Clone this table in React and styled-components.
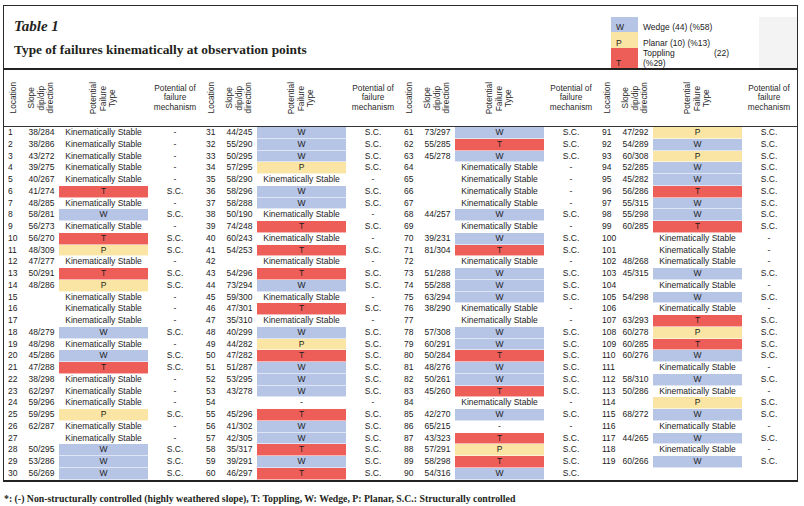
import React from 'react';
import styled, { createGlobalStyle } from 'styled-components';

const GlobalStyle = createGlobalStyle`
  html, body { margin: 0; padding: 0; background: #fff; }
  body { font-family: "Liberation Sans", Arial, sans-serif; color: #1e1e1e; }
`;

const fills = { W: '#b6c5e6', P: '#fbe5a4', T: '#ee5e59' };

const raw = [
  '38/284:K,38/286:K,43/272:K,39/275:K,40/267:K,41/274:T,48/285:K,58/281:W,56/273:K,56/270:T,48/309:P,47/277:K,50/291:T,48/286:P,:K,:K,:K,48/279:W,48/298:K,45/286:W,47/288:T,38/298:K,62/297:K,59/296:K,59/295:P,62/287:K,:K,50/295:W,53/286:W,56/269:W',
  '44/245:W,55/290:W,50/295:W,57/295:P,58/290:K,58/296:W,58/288:W,50/190:K,74/248:T,60/243:K,54/253:T,:K,54/296:T,73/294:W,59/300:K,47/301:T,35/310:K,40/299:W,44/282:P,47/282:T,51/287:W,53/295:W,43/278:W,:D,45/296:T,41/302:W,42/305:W,35/317:T,39/291:W,46/297:T',
  '73/297:W,55/285:T,45/278:W,:K,:K,:K,:K,44/257:W,:K,39/231:W,81/304:T,:K,51/288:W,55/288:W,63/294:W,38/290:K,:K,57/308:W,60/291:W,50/284:T,48/276:W,50/261:W,45/260:T,:K,42/270:W,65/215:D,43/323:T,57/291:P,58/298:T,54/316:W',
  '47/292:P,54/289:W,60/308:P,52/285:W,45/282:W,56/286:T,55/315:W,55/298:W,60/285:T,:K,:K,48/268:K,45/315:W,:K,54/298:W,:K,63/293:T,60/278:P,60/285:T,60/276:W,:K,58/310:W,50/286:K,:P,68/272:W,:K,44/265:W,:K,60/266:W',
];

const groups = raw.map((s, gi) =>
  s.split(',').map((item, i) => {
    const [slope, type] = item.split(':');
    return { loc: gi * 30 + i + 1, slope, type };
  })
);

const typeLabel = (t) =>
  t === 'K' ? 'Kinematically Stable' : t === 'D' ? '-' : t;
const mechLabel = (t) => (fills[t] ? 'S.C.' : '-');

const Page = styled.div`
  width: 804px;
  height: 506px;
  box-sizing: border-box;
  padding: 5px 0 0 3px;
  overflow: hidden;
`;

const Frame = styled.div`
  width: 795px;
  box-sizing: border-box;
  border: 1px solid #2a2a2a;
  border-bottom: 2px solid #222;
`;

const TopSection = styled.div`
  display: flex;
  justify-content: space-between;
  height: 62px;
`;

const TitleBlock = styled.div`
  padding: 13px 0 0 10px;
  font-family: "Liberation Serif", "Times New Roman", serif;
  color: #231f20;
`;

const TableLabel = styled.div`
  font-style: italic;
  font-weight: 700;
  font-size: 15px;
  line-height: 15px;
`;

const Title = styled.div`
  font-weight: 700;
  font-size: 13.4px;
  line-height: 15px;
  margin-top: 8px;
`;

const Legend = styled.div`
  align-self: flex-end;
  display: grid;
  grid-template-columns: 27px 121px 38px;
  grid-template-rows: 15px 16px 20px;
  font-size: 8.5px;
  line-height: 10px;
  color: #222;
`;

const Swatch = styled.div`
  background: ${(p) => fills[p.$t]};
  display: flex;
  align-items: flex-end;
  padding: 0 0 0 5px;
`;

const LegendText = styled.div`
  display: flex;
  flex-direction: column;
  justify-content: flex-end;
  padding-left: 5px;
`;

const SpreadLine = styled.div`
  display: flex;
  justify-content: space-between;
  width: 86px;
`;

const GrayBox = styled.div`
  grid-column: 3;
  grid-row: 1 / span 3;
  background: #f3f3f3;
`;

const Header = styled.div`
  display: flex;
  height: 59px;
  box-sizing: border-box;
  border-top: 2px solid #222;
  border-bottom: 1px solid #333;
`;

const colTemplate = '20px 35px 89px 54px';

const HeadGroup = styled.div`
  width: 198px;
  display: grid;
  grid-template-columns: ${colTemplate};
  font-size: 8.3px;
  line-height: 9.5px;
  color: #2a2a2a;
`;

const Rotated = styled.div`
  writing-mode: vertical-rl;
  transform: rotate(180deg);
  text-align: center;
  place-self: center;
`;

const MechHead = styled.div`
  place-self: center;
  text-align: center;
`;

const Body = styled.div`
  display: flex;
`;

const Group = styled.div`
  width: 198px;
  display: grid;
  grid-template-rows: repeat(30, 11.75px);
`;

const Row = styled.div`
  display: grid;
  grid-template-columns: ${colTemplate};
  font-size: 8.5px;
  line-height: 11.75px;
  color: #1c1c1c;
  white-space: nowrap;
`;

const Loc = styled.div`
  padding-left: 4px;
`;

const Slope = styled.div`
  text-align: center;
`;

const TypeCell = styled.div`
  text-align: center;
  background: ${(p) => fills[p.$t] || 'transparent'};
  box-shadow: ${(p) =>
    fills[p.$t] ? 'inset 0 -1px 0 rgba(255,255,255,0.55)' : 'none'};
`;

const Mech = styled.div`
  text-align: center;
`;

const Footer = styled.div`
  font-family: "Liberation Serif", "Times New Roman", serif;
  font-weight: 700;
  font-size: 9.8px;
  line-height: 10px;
  margin-top: 12px;
  padding-left: 1px;
  color: #231f20;
`;

const HeaderCells = () => (
  <HeadGroup>
    <Rotated>Location</Rotated>
    <Rotated>
      Slope
      <br />
      dip/dip
      <br />
      direction
    </Rotated>
    <Rotated>
      Potential
      <br />
      Failure
      <br />
      Type
    </Rotated>
    <MechHead>
      Potential of
      <br />
      failure
      <br />
      mechanism
    </MechHead>
  </HeadGroup>
);

export default function App() {
  return (
    <Page>
      <GlobalStyle />
      <Frame>
        <TopSection>
          <TitleBlock>
            <TableLabel>Table 1</TableLabel>
            <Title>Type of failures kinematically at observation points</Title>
          </TitleBlock>
          <Legend>
            <Swatch $t="W">W</Swatch>
            <LegendText>Wedge (44) (%58)</LegendText>
            <GrayBox />
            <Swatch $t="P">P</Swatch>
            <LegendText>Planar (10) (%13)</LegendText>
            <Swatch $t="T">T</Swatch>
            <LegendText>
              <SpreadLine>
                <span>Toppling</span>
                <span>(22)</span>
              </SpreadLine>
              <span>(%29)</span>
            </LegendText>
          </Legend>
        </TopSection>
        <Header>
          {[0, 1, 2, 3].map((i) => (
            <HeaderCells key={i} />
          ))}
        </Header>
        <Body>
          {groups.map((rows, gi) => (
            <Group key={gi}>
              {rows.map((r) => (
                <Row key={r.loc}>
                  <Loc>{r.loc}</Loc>
                  <Slope>{r.slope}</Slope>
                  <TypeCell $t={r.type}>{typeLabel(r.type)}</TypeCell>
                  <Mech>{mechLabel(r.type)}</Mech>
                </Row>
              ))}
            </Group>
          ))}
        </Body>
      </Frame>
      <Footer>
        *: (-) Non-structurally controlled (highly weathered slope), T: Toppling, W: Wedge, P: Planar, S.C.: Structurally controlled
      </Footer>
    </Page>
  );
}
